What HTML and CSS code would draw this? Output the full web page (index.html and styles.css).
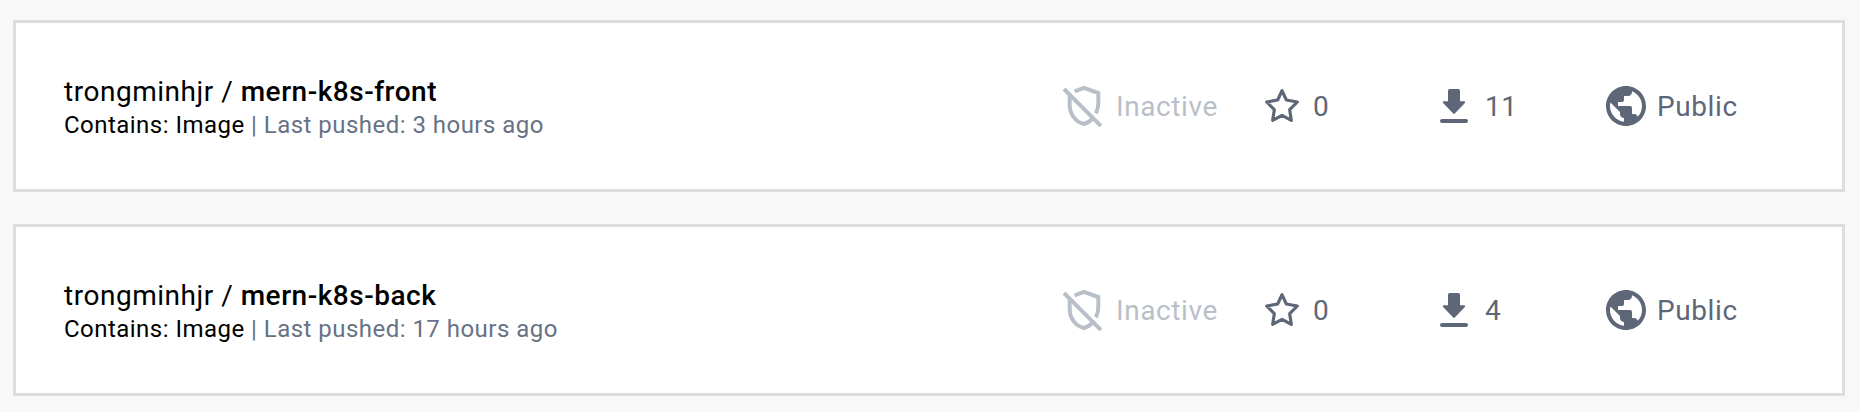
FILE: index.html
```html
<!DOCTYPE html>
<html lang="en">
<head>
<meta charset="utf-8">
<title>Repositories</title>
<link rel="stylesheet" href="styles.css">
</head>
<body>
<svg class="sprite" aria-hidden="true">
  <symbol id="shield-off" viewBox="66 45 120 126">
    <g fill="none" stroke="currentColor" stroke-width="12">
      <path d="M104 64L132 53.500L175 69V98Q175 114 168 130"/>
      <path d="M89 76V104C89 132 106 156 132 162Q146 158 157 147"/>
      <path d="M72 57L183 168"/>
    </g>
  </symbol>
  <symbol id="star" viewBox="72 54 108 108">
    <path fill="none" stroke="currentColor" stroke-width="9.500" stroke-linejoin="round" d="M126 62L139 90L172 96L149 119L154 151L126 136L98 151L103 119L80 96L113 90Z"/>
  </symbol>
  <symbol id="download" viewBox="597 51 90 108">
    <path fill="currentColor" d="M629 54H655Q660 54 660 59V91H672Q678 92 674 97L645 127Q642 130 639 127L610 97Q606 92 612 91H624V59Q624 54 629 54Z"/>
    <rect x="600" y="144" width="84" height="12" rx="6" fill="currentColor"/>
  </symbol>
  <symbol id="globe" viewBox="0 0 24 24">
    <path fill="currentColor" d="M12 2C6.480 2 2 6.480 2 12s4.480 10 10 10 10-4.480 10-10S17.520 2 12 2zm-1 17.930c-3.950-.49-7-3.850-7-7.930 0-.62.08-1.210.21-1.790L9 15v1c0 1.100.9 2 2 2v1.930zm6.900-2.540c-.26-.81-1-1.390-1.900-1.390h-1v-3c0-.55-.45-1-1-1H8v-2h2c.55 0 1-.45 1-1V7h2c1.100 0 2-.9 2-2v-.41c2.930 1.190 5 4.060 5 7.410 0 2.080-.8 3.970-2.100 5.390z"/>
  </symbol>
</svg>
<main class="repo-list">
  <article class="repo">
    <div class="summary">
      <div class="title">trongminhjr / <strong>mern-k8s-front</strong></div>
      <div class="meta">Contains: Image <span class="muted">| Last pushed: 3 hours ago</span></div>
    </div>
    <div class="stat inactive"><svg class="icon-shield"><use href="#shield-off"/></svg><span>Inactive</span></div>
    <div class="stat stars"><svg class="icon-star"><use href="#star"/></svg><span>0</span></div>
    <div class="stat downloads"><svg class="icon-download"><use href="#download"/></svg><span>11</span></div>
    <div class="stat visibility"><svg class="icon-globe"><use href="#globe"/></svg><span>Public</span></div>
  </article>
  <article class="repo">
    <div class="summary">
      <div class="title">trongminhjr / <strong>mern-k8s-back</strong></div>
      <div class="meta">Contains: Image <span class="muted">| Last pushed: 17 hours ago</span></div>
    </div>
    <div class="stat inactive"><svg class="icon-shield"><use href="#shield-off"/></svg><span>Inactive</span></div>
    <div class="stat stars"><svg class="icon-star"><use href="#star"/></svg><span>0</span></div>
    <div class="stat downloads"><svg class="icon-download"><use href="#download"/></svg><span>4</span></div>
    <div class="stat visibility"><svg class="icon-globe"><use href="#globe"/></svg><span>Public</span></div>
  </article>
</main>
</body>
</html>
```
FILE: styles.css
```css
* { box-sizing: border-box; }
body {
  margin: 0;
  background: #f8f8f8;
  font-family: Roboto, sans-serif;
  color: #000;
}
.sprite { display: none; }
.repo-list {
  display: flex;
  flex-direction: column;
  gap: 32px;
  padding: 20px 15px 16px 13px;
}
.repo {
  display: grid;
  grid-template-columns: 1fr 202px 175px 163px 192px;
  align-items: center;
  height: 172px;
  padding: 0 48px;
  border: 3px solid #dcdde1;
  background: #fff;
}
.summary {
  padding-top: 4px;
  white-space: nowrap;
}
.title {
  font-size: 28px;
  line-height: 34px;
  letter-spacing: 0.52px;
}
.title strong { font-weight: 500; }
.meta {
  font-size: 24px;
  line-height: 32px;
  letter-spacing: 0.47px;
}
.muted { color: #677285; }
.stat {
  display: flex;
  align-items: center;
  color: #5d6778;
  font-size: 28px;
  line-height: 40px;
  letter-spacing: 0.6px;
}
.stat svg { flex: none; }
.stat span { padding-top: 2px; }
.inactive { gap: 14px; color: #b9bfc9; }
.stars { gap: 13px; }
.downloads { gap: 16px; }
.visibility { gap: 7px; }
.icon-shield { width: 40px; height: 42px; }
.icon-star { width: 36px; height: 36px; }
.icon-download { width: 30px; height: 36px; }
.icon-globe { width: 48px; height: 48px; }
```
